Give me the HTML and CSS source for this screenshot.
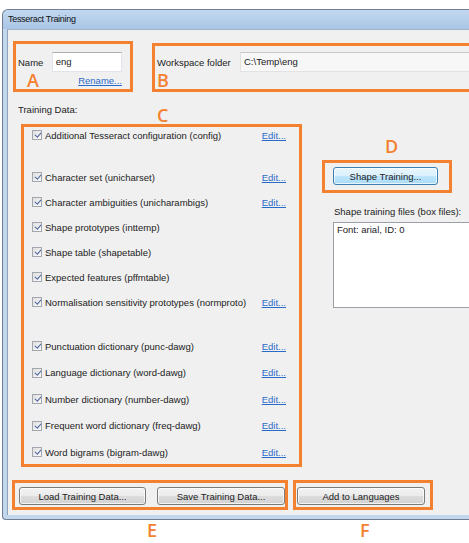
FILE: index.html
```html
<!DOCTYPE html>
<html lang="en">
<head>
    <meta charset="UTF-8">
    <title>Tesseract Training</title>
    <link rel="stylesheet" href="styles.css">
</head>
<body>

    <div class="window">
        <div class="titlebar">Tesseract Training</div>
        <div class="client">

            <div class="top-row">
                <div class="mark mark-a">
                    <div class="field-row">
                        <span class="name-label">Name</span>
                        <div class="textbox name-box">eng</div>
                    </div>
                    <div class="letter-row">
                        <span class="letter">A</span>
                        <a class="link" href="#">Rename...</a>
                    </div>
                </div>
                <div class="mark mark-b">
                    <div class="field-row">
                        <span class="folder-label">Workspace folder</span>
                        <div class="textbox folder-box">C:\Temp\eng</div>
                    </div>
                    <div class="letter-row">
                        <span class="letter">B</span>
                    </div>
                </div>
            </div>

            <div class="middle">
                <div class="data-col">
                    <div class="data-head">
                        <span class="data-title">Training Data:</span>
                        <span class="letter letter-c">C</span>
                    </div>
                    <div class="mark mark-c">
                        <div class="group group-one">
                            <div class="item"><span class="check"></span><span class="item-text">Additional Tesseract configuration (config)</span><a class="link" href="#">Edit...</a></div>
                        </div>
                        <div class="group group-two">
                            <div class="item"><span class="check"></span><span class="item-text">Character set (unicharset)</span><a class="link" href="#">Edit...</a></div>
                            <div class="item"><span class="check"></span><span class="item-text">Character ambiguities (unicharambigs)</span><a class="link" href="#">Edit...</a></div>
                            <div class="item"><span class="check"></span><span class="item-text">Shape prototypes (inttemp)</span></div>
                            <div class="item"><span class="check"></span><span class="item-text">Shape table (shapetable)</span></div>
                            <div class="item"><span class="check"></span><span class="item-text">Expected features (pffmtable)</span></div>
                            <div class="item"><span class="check"></span><span class="item-text">Normalisation sensitivity prototypes (normproto)</span><a class="link" href="#">Edit...</a></div>
                        </div>
                        <div class="group group-three">
                            <div class="item"><span class="check"></span><span class="item-text">Punctuation dictionary (punc-dawg)</span><a class="link" href="#">Edit...</a></div>
                            <div class="item"><span class="check"></span><span class="item-text">Language dictionary (word-dawg)</span><a class="link" href="#">Edit...</a></div>
                            <div class="item"><span class="check"></span><span class="item-text">Number dictionary (number-dawg)</span><a class="link" href="#">Edit...</a></div>
                            <div class="item"><span class="check"></span><span class="item-text">Frequent word dictionary (freq-dawg)</span><a class="link" href="#">Edit...</a></div>
                            <div class="item"><span class="check"></span><span class="item-text">Word bigrams (bigram-dawg)</span><a class="link" href="#">Edit...</a></div>
                        </div>
                    </div>
                </div>

                <div class="side-col">
                    <span class="letter letter-d">D</span>
                    <div class="mark mark-d">
                        <button class="btn btn-focus shape-btn">Shape Training...</button>
                    </div>
                    <div class="files-label">Shape training files (box files):</div>
                    <div class="listbox">Font: arial, ID: 0</div>
                </div>
            </div>

            <div class="bottom-row">
                <div class="mark mark-e">
                    <button class="btn">Load Training Data...</button>
                    <button class="btn">Save Training Data...</button>
                </div>
                <div class="mark mark-f">
                    <button class="btn">Add to Languages</button>
                </div>
            </div>

        </div>
    </div>

    <div class="captions">
        <span class="letter letter-e">E</span>
        <span class="letter letter-f">F</span>
    </div>

</body>
</html>
```

FILE: styles.css
```css
body {
    margin: 0;
    background-color: #fff;
    overflow: hidden;
    font-family: "Liberation Sans", Arial, sans-serif;
    font-size: 9.5px;
    color: #222;
}

/* window frame, Windows 7 basic look; the right side is cut off */
.window {
    width: 467px;
    overflow: hidden;
    margin: 9px 0 0 2px;
    border: 1px solid #6f7f93;
    border-right: none;
    border-radius: 6px 0 0 4px;
    background-color: #c2d6ec;
    padding-bottom: 4px;
}

.titlebar {
    height: 19px;
    line-height: 19px;
    padding-left: 5px;
    font-size: 9px;
    letter-spacing: -0.3px;
    color: #111;
    border-radius: 5px 0 0 0;
    background: linear-gradient(to bottom, #c1d7ef, #aac6e6);
}

.client {
    margin-left: 4px;
    border-top: 1px solid #9fb3c9;
    border-left: 1px solid #8ea3bb;
    background-color: #f0f0f0;
    padding: 11px 0 5px 4px;
}

/* orange call-out boxes */
.mark {
    box-sizing: border-box;
    border: 3px solid #f3812f;
}

.letter {
    display: block;
    font-family: "Open Sans", sans-serif;
    font-weight: 600;
    font-size: 18px;
    line-height: 17px;
    color: #f3812f;
}

.link {
    color: #2a6ac8;
    text-decoration: underline;
}

.textbox {
    box-sizing: border-box;
    height: 20px;
    line-height: 18px;
    padding-left: 3px;
    background-color: #fff;
    border: 1px solid #dfe4ea;
    border-top-color: #abadb3;
}

/* top row: name and workspace */
.top-row {
    display: flex;
    align-items: flex-start;
}

.mark-a {
    width: 120px;
    height: 51px;
    margin-left: 1px;
    padding: 8px 8px 0 2px;
}

.mark-b {
    flex: 1;
    height: 49px;
    margin: 2px -12px 0 19px;
    padding: 6px 0 0 2px;
}

.field-row {
    display: flex;
    align-items: center;
}

.name-label {
    width: 34px;
}

.name-box {
    width: 71px;
}

.folder-label {
    width: 83px;
}

.folder-box {
    flex: 1;
    background-color: #f7f7f7;
    border-color: #e2e2e2;
    border-top-color: #c9c9c9;
}

.letter-row {
    display: flex;
    justify-content: space-between;
    align-items: center;
    height: 17px;
}

.mark-a .letter {
    margin-left: 9px;
}

/* middle: training data and shape training */
.middle {
    display: flex;
    gap: 20px;
}

.data-col {
    width: 284px;
    margin-left: 6px;
}

.data-head {
    display: grid;
    grid-template-columns: 139px auto;
    height: 32px;
}

.data-title {
    padding-top: 12px;
    line-height: 12px;
}

.letter-c {
    padding-top: 15px;
}

.mark-c {
    width: 281px;
    height: 343px;
    margin-left: 3px;
    padding: 1px 13px 5px 8px;
}

.group {
    display: flex;
    flex-direction: column;
}

.group-two {
    margin-top: 28px;
    gap: 11px;
}

.group-three {
    margin-top: 30px;
    gap: 12.5px;
}

.item {
    display: flex;
    align-items: center;
    height: 14px;
}

.item-text {
    flex: 1;
    padding-left: 1px;
}

.check {
    position: relative;
    box-sizing: border-box;
    width: 10px;
    height: 10px;
    margin-right: 2px;
    border: 1px solid #a2a6ad;
    background: linear-gradient(135deg, #dedede, #fbfbfb);
}

.check::after {
    content: "";
    position: absolute;
    left: 2.5px;
    top: 0;
    width: 2.5px;
    height: 5px;
    border-right: 1.5px solid #4e64a0;
    border-bottom: 1.5px solid #4e64a0;
    transform: rotate(40deg);
}

.side-col {
    display: flex;
    flex-direction: column;
    flex: 1;
}

.letter-d {
    margin: 46px 0 5px 63px;
}

.mark-d {
    width: 130px;
    height: 33px;
    padding: 4px 0 0 8px;
}

.shape-btn {
    width: 105px;
}

.files-label {
    margin: 13px 0 0 12px;
    line-height: 12px;
}

.listbox {
    box-sizing: border-box;
    height: 86px;
    margin: 4px -12px 0 11px;
    padding: 1px 3px;
    line-height: 12px;
    background-color: #fff;
    border: 1px solid #9c9fa6;
}

/* buttons */
.btn {
    box-sizing: border-box;
    height: 18px;
    padding: 0;
    font-family: "Liberation Sans", Arial, sans-serif;
    font-size: 9.5px;
    color: #222;
    border: 1px solid #7b7b7b;
    border-radius: 3px;
    background: linear-gradient(to bottom, #f3f3f3 0%, #ebebeb 50%, #dddddd 51%, #d1d1d1 100%);
    box-shadow: inset 0 0 0 1px rgba(255, 255, 255, 0.7);
}

.btn-focus {
    border-color: #3c7fb1;
    background: linear-gradient(to bottom, #eaf6fd 0%, #d9f0fc 50%, #bee6fd 51%, #a9dbf6 100%);
}

.bottom-row {
    display: flex;
    gap: 5px;
    margin-top: 13px;
}

.mark-e {
    display: flex;
    gap: 11px;
    width: 276px;
    height: 30px;
    padding: 4px 0 0 4px;
}

.mark-e .btn:first-child {
    width: 127px;
}

.mark-e .btn:last-child {
    width: 128px;
}

.mark-f {
    width: 140px;
    height: 30px;
    padding: 4px 0 0 1px;
}

.mark-f .btn {
    width: 128px;
}

/* letters under the window */
.captions {
    display: flex;
    margin-top: 2px;
}

.letter-e {
    margin-left: 147px;
}

.letter-f {
    margin-left: 203px;
}
```
